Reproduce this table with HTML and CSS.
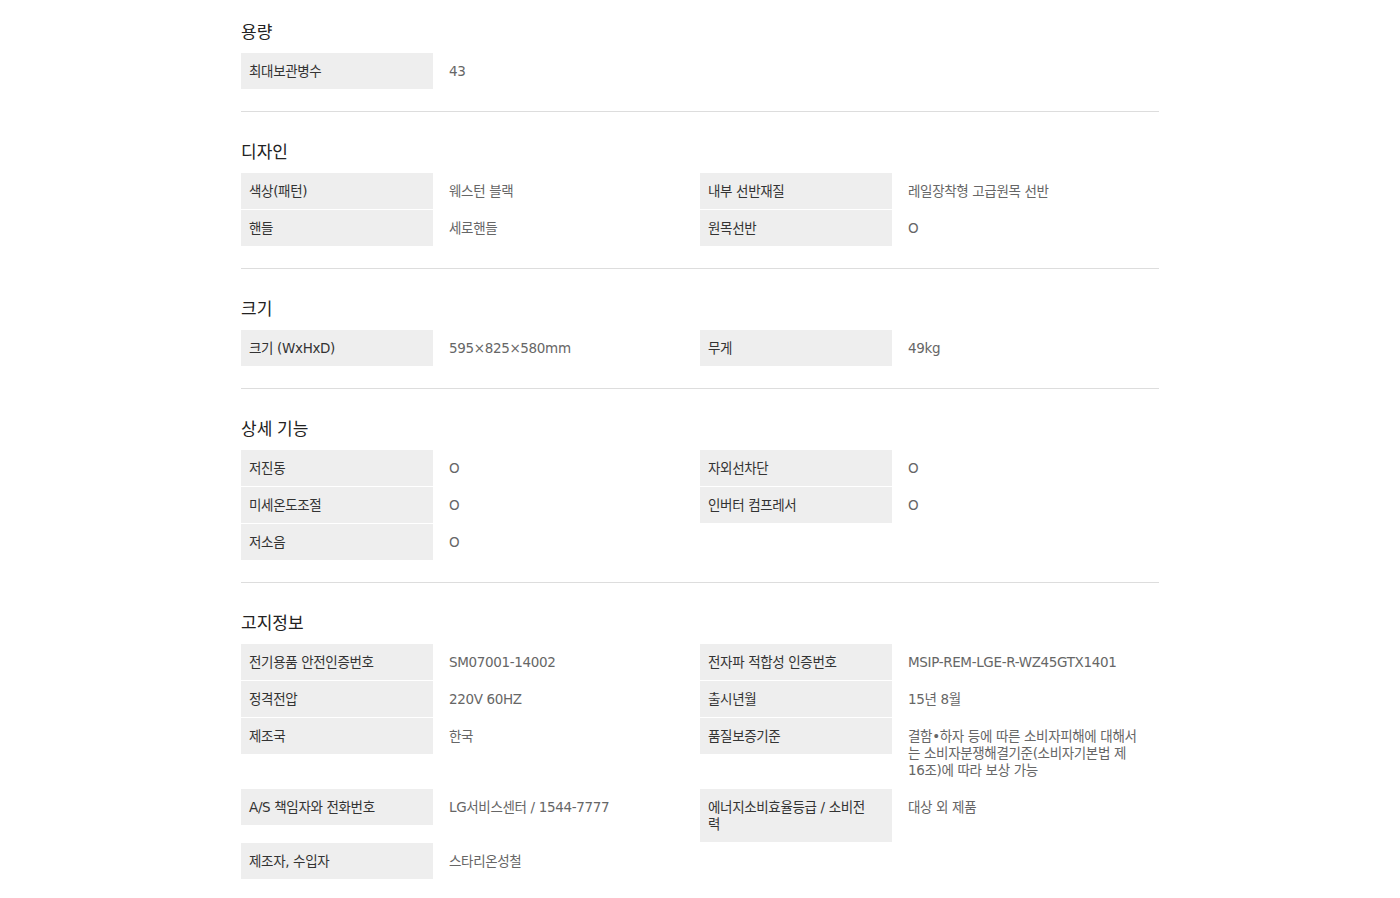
FILE: index.html
```html
<!DOCTYPE html>
<html lang="ko">
<head>
<meta charset="utf-8">
<title>스펙</title>
<link rel="stylesheet" href="styles.css">
</head>
<body>
<div class="spec">
  <section class="sec">
    <h3 class="sec-title">용량</h3>
    <div class="grid">
      <div class="lab">최대보관병수</div><div class="val">43</div>
    </div>
  </section>
  <section class="sec">
    <h3 class="sec-title">디자인</h3>
    <div class="grid">
      <div class="lab">색상(패턴)</div><div class="val">웨스턴 블랙</div>
      <div class="lab">내부 선반재질</div><div class="val">레일장착형 고급원목 선반</div>
      <div class="lab">핸들</div><div class="val">세로핸들</div>
      <div class="lab">원목선반</div><div class="val">O</div>
    </div>
  </section>
  <section class="sec">
    <h3 class="sec-title">크기</h3>
    <div class="grid">
      <div class="lab">크기 (WxHxD)</div><div class="val">595×825×580mm</div>
      <div class="lab">무게</div><div class="val">49kg</div>
    </div>
  </section>
  <section class="sec">
    <h3 class="sec-title">상세 기능</h3>
    <div class="grid">
      <div class="lab">저진동</div><div class="val">O</div>
      <div class="lab">자외선차단</div><div class="val">O</div>
      <div class="lab">미세온도조절</div><div class="val">O</div>
      <div class="lab">인버터 컴프레서</div><div class="val">O</div>
      <div class="lab">저소음</div><div class="val">O</div>
    </div>
  </section>
  <section class="sec">
    <h3 class="sec-title">고지정보</h3>
    <div class="grid">
      <div class="lab">전기용품 안전인증번호</div><div class="val">SM07001-14002</div>
      <div class="lab">전자파 적합성 인증번호</div><div class="val">MSIP-REM-LGE-R-WZ45GTX1401</div>
      <div class="lab">정격전압</div><div class="val">220V 60HZ</div>
      <div class="lab">출시년월</div><div class="val">15년 8월</div>
      <div class="lab">제조국</div><div class="val">한국</div>
      <div class="lab">품질보증기준</div><div class="val">결함•하자 등에 따른 소비자피해에 대해서는 소비자분쟁해결기준(소비자기본법 제16조)에 따라 보상 가능</div>
      <div class="lab">A/S 책임자와 전화번호</div><div class="val">LG서비스센터 / 1544-7777</div>
      <div class="lab">에너지소비효율등급 / 소비전력</div><div class="val">대상 외 제품</div>
      <div class="lab">제조자, 수입자</div><div class="val">스타리온성철</div>
    </div>
  </section>
</div>
</body>
</html>
```

FILE: styles.css
```css
html, body {
  margin: 0;
  padding: 0;
  background: #ffffff;
}

body {
  font-family: "DejaVu Sans", "Noto Sans CJK KR", sans-serif;
  color: #333333;
}

.spec {
  width: 918px;
  margin: 0 auto;
}

.sec {
  padding: 27px 0 22px;
  border-top: 1px solid #dddddd;
}

.sec:first-child {
  padding-top: 19px;
  border-top: 0;
}

.sec-title {
  margin: 0 0 10px;
  font-family: "Noto Sans CJK KR", sans-serif;
  font-size: 17px;
  line-height: 24px;
  font-weight: 400;
  letter-spacing: 0;
  color: #222222;
}

.grid {
  display: grid;
  grid-template-columns: 192px 267px 192px 267px;
  align-items: start;
  row-gap: 1px;
  font-size: 13.5px;
  line-height: 17px;
  letter-spacing: -0.35px;
}

.lab {
  background: #eeeeee;
  padding: 10px 16px 9px 8px;
  color: #333333;
  word-break: normal;
}

.val {
  padding: 10px 19px 9px 16px;
  color: #666666;
  word-break: normal;
}
```
